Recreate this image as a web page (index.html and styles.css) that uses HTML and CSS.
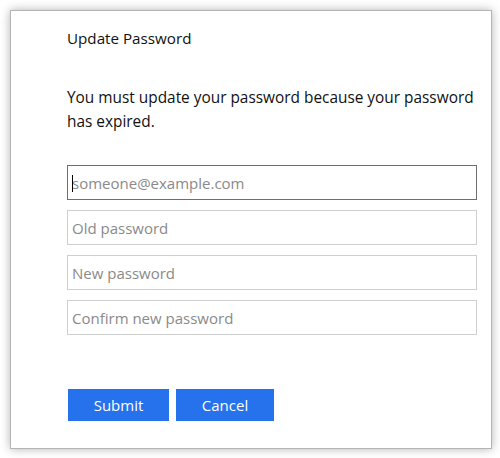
FILE: index.html
```html
<!DOCTYPE html>
<html>
<head>
<meta charset="utf-8">
<link rel="stylesheet" href="styles.css">
</head>
<body>
<div class="card">
  <div class="title">Update Password</div>
  <p class="msg">You must update your password because your password has expired.</p>
  <div class="fields">
    <div class="field focused"><span class="caret"></span><span class="ph">someone@example.com</span></div>
    <div class="field"><span class="ph">Old password</span></div>
    <div class="field"><span class="ph">New password</span></div>
    <div class="field"><span class="ph">Confirm new password</span></div>
  </div>
  <div class="buttons">
    <div class="btn submit">Submit</div>
    <div class="btn cancel">Cancel</div>
  </div>
</div>
</body>
</html>
```
FILE: styles.css
```css
html, body {
  margin: 0;
  padding: 0;
  background: #fff;
}
body {
  padding: 10px;
  font-family: "Open Sans", "Noto Sans", sans-serif;
  color: #000;
}
.card {
  border: 1px solid #b4b4b4;
  box-shadow: 0 0 9px rgba(0,0,0,0.3);
  padding: 0 0 0 56px;
  box-sizing: border-box;
  width: 482px;
  height: 439px;
}
.title {
  font-size: 15.2px;
  margin-top: 16px;
  line-height: 22px;
  color: #111;
}
.msg {
  margin: 37px 0 0 0;
  font-size: 15.4px;
  line-height: 24px;
  width: 412px;
  color: #111;
}
.fields {
  margin-top: 31px;
  display: flex;
  flex-direction: column;
  gap: 10px;
  width: 410px;
}
.field {
  height: 35px;
  border: 1px solid #cfcfcf;
  box-sizing: border-box;
  display: flex;
  align-items: center;
  padding-left: 4px;
  position: relative;
}
.field.focused {
  border-color: #6e6e6e;
}
.caret {
  position: absolute;
  left: 4px;
  top: 9px;
  width: 1px;
  height: 17px;
  background: #000;
}
.ph {
  font-size: 15px;
  color: #8a8a8a;
}
.buttons {
  margin-top: 54px;
  display: flex;
  gap: 7px;
}
.btn {
  height: 32px;
  background: #2672ec;
  color: #fff;
  font-size: 15px;
  display: flex;
  align-items: center;
  justify-content: center;
}
.submit { width: 101px; margin-left: 1px; }
.cancel { width: 98px; }
```
